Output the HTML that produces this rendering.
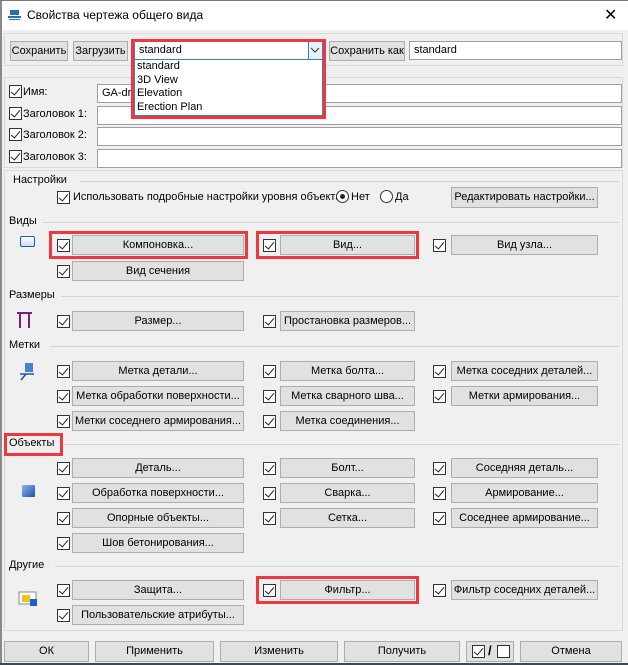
<!DOCTYPE html><html><head><meta charset="utf-8"><style>
*{box-sizing:border-box;margin:0;padding:0}
body{width:628px;height:665px;background:#f0f0f0;font-family:"Liberation Sans",sans-serif;font-size:11px;color:#000;position:relative;overflow:hidden}
.a{position:absolute}
.btn{position:absolute;background:#e1e1e1;border:1px solid #adadad;text-align:center;line-height:18px;height:20px;white-space:nowrap;overflow:hidden}
.inp{position:absolute;background:#fff;border:1px solid #a0a0a0;height:19px;line-height:17px;padding-left:4px}
.cb{position:absolute;width:13px;height:13px;border:1px solid #333;background:#fff}
.cb:after{content:"";position:absolute;left:3px;top:0px;width:4px;height:8px;border:solid #222;border-width:0 1.5px 1.5px 0;transform:rotate(40deg)}
.panel{position:absolute;border:1px solid #dadada}
.sec{position:absolute;left:9px;background:#f0f0f0;padding-right:6px}
.line{position:absolute;left:9px;right:9px;height:1px;background:#d4d4d4}
.red{position:absolute;border:3px solid #f0363f;z-index:6}
.lbl{position:absolute;white-space:nowrap}
</style></head><body>
<div class="a" style="left:0;top:0;width:628px;height:30px;background:#fff"></div>
<div class="a" style="left:0;top:0;width:2px;height:665px;background:#8a8a8a"></div>
<div class="a" style="left:0;top:0;width:628px;height:1px;background:#777"></div>
<svg class="a" style="left:7px;top:8px" width="16" height="14"><rect x="3" y="2" width="9" height="5" fill="#2a6fb0"/><rect x="1" y="8" width="13" height="2" fill="#2a6fb0"/><rect x="2" y="11" width="11" height="1" fill="#2a6fb0"/></svg>
<div class="lbl" style="left:27px;top:8px;font-size:12px">Свойства чертежа общего вида</div>
<div class="lbl" style="left:604px;top:5px;font-size:16px">✕</div>

<div class="panel" style="left:4px;top:33px;width:619px;height:33px"></div>
<div class="btn" style="left:10px;top:41px;width:58px">Сохранить</div>
<div class="btn" style="left:73px;top:41px;width:55px">Загрузить</div>
<div class="inp" style="left:134px;top:41px;width:189px;border-color:#3c7fb1">standard</div>
<div class="a" style="left:308px;top:42px;width:14px;height:17px;background:#e5f1fb;border-left:1px solid #3c7fb1"></div>
<svg class="a" style="left:310px;top:46px" width="10" height="8"><path d="M1 2 L5 6 L9 2" stroke="#333" fill="none"/></svg>
<div class="a" style="left:134px;top:59px;width:189px;height:57px;background:#fff;border:1px solid #3c7fb1;line-height:13.5px;padding:0 2px;z-index:5;font-size:11px">standard<br>3D View<br>Elevation<br>Erection Plan</div>
<div class="red" style="left:131px;top:39px;width:195px;height:80px"></div>
<div class="btn" style="left:329px;top:41px;width:76px">Сохранить как</div>
<div class="inp" style="left:409px;top:41px;width:213px">standard</div>

<div class="panel" style="left:4px;top:77px;width:619px;height:91px"></div>
<div class="cb" style="left:9px;top:85px"></div><div class="lbl" style="left:23px;top:86px">Имя:</div>
<div class="inp" style="left:97px;top:84px;width:525px">GA-dra</div>
<div class="cb" style="left:9px;top:107px"></div><div class="lbl" style="left:23px;top:108px">Заголовок 1:</div>
<div class="inp" style="left:97px;top:106px;width:525px"></div>
<div class="cb" style="left:9px;top:128px"></div><div class="lbl" style="left:23px;top:129px">Заголовок 2:</div>
<div class="inp" style="left:97px;top:127px;width:525px"></div>
<div class="cb" style="left:9px;top:150px"></div><div class="lbl" style="left:23px;top:151px">Заголовок 3:</div>
<div class="inp" style="left:97px;top:149px;width:525px"></div>

<div class="panel" style="left:4px;top:170px;width:619px;height:461px"></div>
<div class="line" style="top:181px;left:80px"></div><div class="sec" style="left:13px;top:174px">Настройки</div>
<div class="cb" style="left:57px;top:191px"></div><div class="lbl" style="left:73px;top:191px">Использовать подробные настройки уровня объекта</div>
<div class="a" style="left:336px;top:190px;width:13px;height:13px;border:1px solid #333;border-radius:50%;background:#fff"></div><div class="a" style="left:340px;top:194px;width:5px;height:5px;border-radius:50%;background:#222"></div>
<div class="lbl" style="left:351px;top:191px">Нет</div>
<div class="a" style="left:380px;top:190px;width:13px;height:13px;border:1px solid #333;border-radius:50%;background:#fff"></div>
<div class="lbl" style="left:395px;top:191px">Да</div>
<div class="btn" style="left:451px;top:187px;width:147px;height:21px;line-height:19px">Редактировать настройки...</div>

<div class="line" style="top:222px;left:40px"></div><div class="sec" style="top:215px">Виды</div>
<div class="a" style="left:20px;top:236px;width:15px;height:11px;border:1px solid #1f5fb8;border-radius:2px;background:linear-gradient(#fff,#cde)"></div>
<div class="line" style="top:296px;left:60px"></div><div class="sec" style="top:289px">Размеры</div>
<svg class="a" style="left:16px;top:310px" width="18" height="20"><path d="M1 3 H16 M4 3 V18 M13 3 V18" stroke="#7a1f7a" stroke-width="2" fill="none"/></svg>
<div class="line" style="top:346px;left:50px"></div><div class="sec" style="top:339px">Метки</div>
<svg class="a" style="left:18px;top:362px" width="20" height="20"><rect x="7" y="1" width="8" height="9" fill="#4a7fd0"/><path d="M2 12 H16 M8 12 L3 18" stroke="#1f4fb0" stroke-width="1.5"/></svg>
<div class="line" style="top:444px;left:64px"></div><div class="sec" style="top:437px">Объекты</div>
<div class="red" style="left:4px;top:433px;width:59px;height:23px"></div>
<div class="a" style="left:22px;top:485px;width:13px;height:12px;background:linear-gradient(135deg,#8fb4f0,#1e4fa8);border-radius:1px"></div>
<div class="line" style="top:566px;left:55px"></div><div class="sec" style="top:559px">Другие</div>
<svg class="a" style="left:18px;top:590px" width="20" height="17"><rect x="1" y="2" width="17" height="12" fill="#fff" stroke="#888"/><rect x="4" y="5" width="8" height="7" fill="#f0c419"/><rect x="12" y="9" width="7" height="7" fill="#1f5fc8"/></svg>

<div class="cb" style="left:57px;top:239px"></div><div class="btn" style="left:72px;top:235px;width:172px">Компоновка...</div>
<div class="cb" style="left:263px;top:239px"></div><div class="btn" style="left:280px;top:235px;width:135px">Вид...</div>
<div class="cb" style="left:433px;top:239px"></div><div class="btn" style="left:451px;top:235px;width:147px">Вид узла...</div>
<div class="red" style="left:49px;top:231px;width:199px;height:28px"></div>
<div class="red" style="left:256px;top:231px;width:163px;height:28px"></div>
<div class="cb" style="left:57px;top:265px"></div><div class="btn" style="left:72px;top:261px;width:172px">Вид сечения</div>

<div class="cb" style="left:57px;top:315px"></div><div class="btn" style="left:72px;top:311px;width:172px">Размер...</div>
<div class="cb" style="left:263px;top:315px"></div><div class="btn" style="left:280px;top:311px;width:135px">Простановка размеров...</div>

<div class="cb" style="left:57px;top:365px"></div><div class="btn" style="left:72px;top:361px;width:172px">Метка детали...</div>
<div class="cb" style="left:263px;top:365px"></div><div class="btn" style="left:280px;top:361px;width:135px">Метка болта...</div>
<div class="cb" style="left:433px;top:365px"></div><div class="btn" style="left:451px;top:361px;width:147px">Метка соседних деталей...</div>
<div class="cb" style="left:57px;top:390px"></div><div class="btn" style="left:72px;top:386px;width:172px">Метка обработки поверхности...</div>
<div class="cb" style="left:263px;top:390px"></div><div class="btn" style="left:280px;top:386px;width:135px">Метка сварного шва...</div>
<div class="cb" style="left:433px;top:390px"></div><div class="btn" style="left:451px;top:386px;width:147px">Метки армирования...</div>
<div class="cb" style="left:57px;top:415px"></div><div class="btn" style="left:72px;top:411px;width:172px">Метки соседнего армирования...</div>
<div class="cb" style="left:263px;top:415px"></div><div class="btn" style="left:280px;top:411px;width:135px">Метка соединения...</div>

<div class="cb" style="left:57px;top:462px"></div><div class="btn" style="left:72px;top:458px;width:172px">Деталь...</div>
<div class="cb" style="left:263px;top:462px"></div><div class="btn" style="left:280px;top:458px;width:135px">Болт...</div>
<div class="cb" style="left:433px;top:462px"></div><div class="btn" style="left:451px;top:458px;width:147px">Соседняя деталь...</div>
<div class="cb" style="left:57px;top:487px"></div><div class="btn" style="left:72px;top:483px;width:172px">Обработка поверхности...</div>
<div class="cb" style="left:263px;top:487px"></div><div class="btn" style="left:280px;top:483px;width:135px">Сварка...</div>
<div class="cb" style="left:433px;top:487px"></div><div class="btn" style="left:451px;top:483px;width:147px">Армирование...</div>
<div class="cb" style="left:57px;top:512px"></div><div class="btn" style="left:72px;top:508px;width:172px">Опорные объекты...</div>
<div class="cb" style="left:263px;top:512px"></div><div class="btn" style="left:280px;top:508px;width:135px">Сетка...</div>
<div class="cb" style="left:433px;top:512px"></div><div class="btn" style="left:451px;top:508px;width:147px">Соседнее армирование...</div>
<div class="cb" style="left:57px;top:537px"></div><div class="btn" style="left:72px;top:533px;width:172px">Шов бетонирования...</div>

<div class="cb" style="left:57px;top:584px"></div><div class="btn" style="left:72px;top:580px;width:172px">Защита...</div>
<div class="cb" style="left:263px;top:584px"></div><div class="btn" style="left:280px;top:580px;width:135px">Фильтр...</div>
<div class="red" style="left:256px;top:576px;width:163px;height:28px"></div>
<div class="cb" style="left:433px;top:584px"></div><div class="btn" style="left:451px;top:580px;width:147px">Фильтр соседних деталей...</div>
<div class="cb" style="left:57px;top:609px"></div><div class="btn" style="left:72px;top:605px;width:172px">Пользовательские атрибуты...</div>

<div class="btn" style="left:4px;top:641px;width:85px;height:21px">ОК</div>
<div class="btn" style="left:95px;top:641px;width:119px;height:21px">Применить</div>
<div class="btn" style="left:220px;top:641px;width:118px;height:21px">Изменить</div>
<div class="btn" style="left:344px;top:641px;width:116px;height:21px">Получить</div>
<div class="btn" style="left:466px;top:641px;width:48px;height:21px"></div>
<div class="cb" style="left:472px;top:645px"></div>
<div class="lbl" style="left:488px;top:643px;font-size:13px;font-weight:bold">/</div>
<div class="a" style="left:497px;top:645px;width:13px;height:13px;border:1px solid #333;background:#fff"></div>
<div class="btn" style="left:520px;top:641px;width:102px;height:21px">Отмена</div>
<div class="a" style="left:0;top:663px;width:628px;height:2px;background:#3b4a5a"></div>
</body></html>
